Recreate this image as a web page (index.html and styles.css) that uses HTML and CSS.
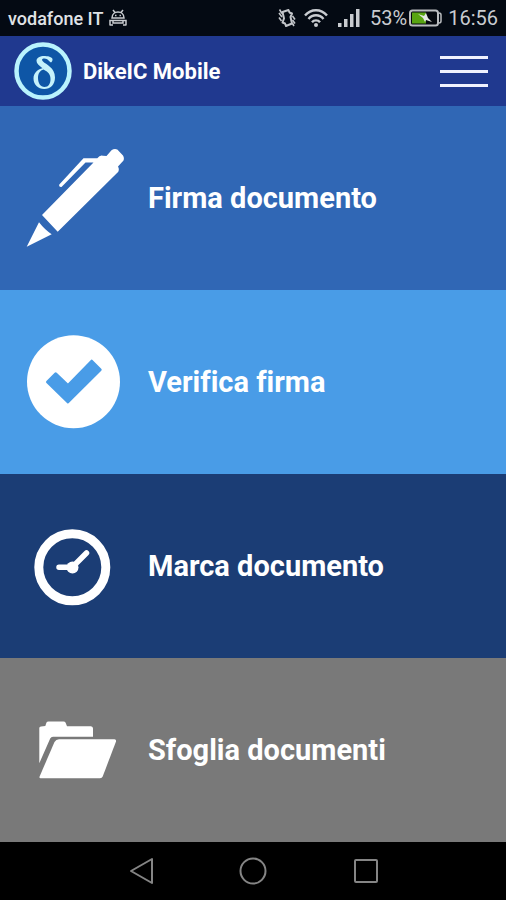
FILE: index.html
```html
<!DOCTYPE html>
<html lang="it">
<head>
<meta charset="utf-8">
<meta name="viewport" content="width=device-width, initial-scale=1">
<title>DikeIC Mobile</title>
<link rel="stylesheet" href="styles.css">
</head>
<body>
<div class="status">
  <span class="carrier">vodafone IT</span>
  <svg class="droid" width="18" height="18" viewBox="0 0 18 18" fill="none" stroke="#c9ccd0" stroke-width="1.500" aria-hidden="true">
    <path d="M4 1l2 2.500M14 1l-2 2.500M3 9c0-8 12-8 12 0zM1 16.500v-5h16v5M4 11.500v2.500h10v-2.500M1 16h3M14 16h3"/>
    <path d="M6 6.500h1.500M10.500 6.500h1.500"/>
  </svg>
  <div class="indicators">
    <svg class="vibrate" width="18" height="20" viewBox="0 0 18 20" fill="none" stroke="#c3c6ca" stroke-width="1.600" stroke-linejoin="round" aria-hidden="true">
      <path d="M4.500 4L10.500 2L11.500 4.500L14 5.500L12.500 9L14 15.500L8 18L7 15.500L4.500 14.500L6 10.500z" stroke-width="2"/>
      <path d="M1 5l3 4M1.500 1.500l2.500 4M1 9.500l2.500 3.500M14.500 8l2.500 3.500M14.500 12l2.500 3.500M14.500 15.500l1.500 2.500"/>
    </svg>
    <svg class="wifi" width="24" height="20" viewBox="0 0 24 20" fill="none" stroke="#c9ccd0" stroke-width="2.400" aria-hidden="true">
      <path d="M1 7.500c6-7 16-7 22 0M4.500 11c4-5 11-5 15 0M8 14.300c2-2.600 6-2.600 8 0"/>
      <circle cx="12" cy="17" r="2" fill="#c9ccd0" stroke="none"/>
    </svg>
    <svg class="signal" width="22" height="20" viewBox="0 0 22 20" fill="#c9ccd0" aria-hidden="true">
      <path d="M0 15h3.500v4H0zM6 11h3.500v8H6zM12 6h3.500v13H12zM18 1h3.500v18H18z"/>
    </svg>
    <span>53%</span>
    <svg class="battery" width="33" height="18" viewBox="0 0 33 18" aria-hidden="true">
      <rect x="1" y="1.500" width="28" height="15" rx="2.500" fill="#05090f" stroke="#b9bcbf" stroke-width="2"/>
      <path d="M3 3.500h14v11H3z" fill="#58a512"/>
      <path d="M30 4q2 0 2 2v6q0 2-2 2" fill="none" stroke="#b9bcbf" stroke-width="1.500"/>
      <path d="M9 5l6 2 2-3 2 5 4 4-6-2-1 2-2-4z" fill="#e4e8e4"/>
    </svg>
    <span>16:56</span>
  </div>
</div>
<header class="bar">
  <svg class="logo" width="58" height="58" viewBox="0 0 58 58" aria-hidden="true">
    <circle cx="29" cy="29" r="26.500" fill="#0e56a6" stroke="#b9f3fd" stroke-width="4.500"/>
    <path fill="#c5f2fb" fill-rule="evenodd" d="M37 20.500C35 19.500 34 16.800 30.500 16.600C28 16.500 27.300 18 29 19.500C32 22.500 41 25.500 41 35.500C41 42.500 36.500 47 30.300 47C24 47 19.500 42.800 19.500 36.500C19.500 31 23.500 27.300 28.500 26.200C25 23.500 22.500 21.500 22.500 18.800C22.500 15.500 26.500 13.800 31 14C35.500 14.200 39 15.500 38.500 18C38.300 19.300 37.800 20 37 20.500zM29.500 27.500C26 28.500 24 31.500 24 36C24 41 26.500 45 30.500 45C34.500 45 36.500 41.500 36.500 37C36.500 32 34 30 29.500 27.500z"/>
  </svg>
  <h1>DikeIC Mobile</h1>
  <button class="menu" type="button" aria-label="Menu"><i></i><i></i><i></i></button>
</header>
<main class="tiles">
  <a class="tile sign" href="#firma">
    <svg width="100" height="100" viewBox="0 0 100 100" fill="#fff" aria-hidden="true">
      <path d="M2.700 98.700L15 74.300Q21 82 27.700 86.300z"/>
      <path d="M18 67L69.500 14.500H61.500L37.500 39Q34.500 39.500 35.300 36.500L59.500 10.300H73.300Q76 6.500 79 7.700L82.500 8L87.500 2.300Q90.500 0 93.300 1.500L99 7.500Q100.500 10 99.500 12.500L94 18.500Q95.500 21 94.300 23.700L33.700 83.700z"/>
    </svg>
    <span>Firma documento</span>
  </a>
  <a class="tile verify" href="#verifica">
    <svg width="100" height="100" viewBox="0 0 100 100" fill="#fff" aria-hidden="true">
      <circle cx="49.500" cy="49.700" r="46.500"/>
      <path d="M23.500 50L31.700 41.800L44 53.500L67.700 29.200L76.200 37.700L44 69.800z" fill="#499ce7" stroke="#499ce7" stroke-width="3" stroke-linejoin="round"/>
    </svg>
    <span>Verifica firma</span>
  </a>
  <a class="tile stamp" href="#marca">
    <svg width="100" height="100" viewBox="0 0 100 100" fill="none" stroke="#fff" aria-hidden="true">
      <circle cx="48.300" cy="51.300" r="33.500" stroke-width="9"/>
      <path d="M35 51.300H48.300L62.500 37" stroke-width="5.500" stroke-linecap="round"/>
      <circle cx="48.500" cy="51.500" r="6" fill="#fff" stroke="none"/>
    </svg>
    <span>Marca documento</span>
  </a>
  <a class="tile browse" href="#sfoglia">
    <svg width="100" height="100" viewBox="0 0 100 100" fill="#fff" aria-hidden="true">
      <path d="M15.300 63.300V28Q15.300 26.500 17 26.500L21.300 26L22.500 22.500Q23 21.500 24.500 21.500H39.500Q41 21.500 41.500 22.500L43 26.200H67Q69 26.500 69 28.500V36.700H29Q27 36.700 26.200 38.500z"/>
      <path d="M35 39.300H90.500Q92.500 39.500 92 41.500L78.700 76.500Q78 78.300 76 78.300H16.500Q15 78 15.600 76.500L30.500 42Q32 39.300 35 39.300z"/>
    </svg>
    <span>Sfoglia documenti</span>
  </a>
</main>
<nav class="keys">
  <button type="button" aria-label="Indietro"><svg width="28" height="28" viewBox="0 0 28 28"><path d="M25 2v24L4 14z"/></svg></button>
  <button type="button" aria-label="Home"><svg width="28" height="28" viewBox="0 0 28 28"><circle cx="14" cy="14" r="12.500"/></svg></button>
  <button type="button" aria-label="Recenti"><svg width="28" height="28" viewBox="0 0 28 28"><rect x="4" y="3" width="22" height="22" rx="1"/></svg></button>
</nav>
</body>
</html>
```
FILE: styles.css
```css
* {
  box-sizing: border-box;
}

body {
  margin: 0;
  min-height: 100vh;
  display: flex;
  flex-direction: column;
  background: #000;
  color: #fff;
  font-family: Roboto, "Liberation Sans", sans-serif;
  font-variant-ligatures: none;
}

button {
  padding: 0;
  border: 0;
  background: none;
}

svg {
  display: block;
  flex: none;
}

.status {
  height: 36px;
  display: flex;
  align-items: center;
  padding: 0 8px;
  background: #040a13;
  color: #c9ccd0;
  font-size: 20px;
  white-space: nowrap;
}

.carrier {
  color: #e0e3e6;
  font-size: 18px;
  font-weight: 500;
}

.droid {
  margin-left: 6px;
}

.indicators {
  margin-left: auto;
  display: flex;
  align-items: center;
}

.wifi {
  margin-left: 8px;
}

.signal {
  margin: 0 10px;
}

.battery {
  margin: 0 6px 0 2px;
}

.bar {
  height: 70px;
  display: flex;
  align-items: center;
  gap: 11px;
  padding: 0 18px 0 14px;
  background: #20398f;
}

.bar h1 {
  margin: 0;
  font-size: 22px;
  font-weight: 700;
}

.menu {
  margin-left: auto;
  width: 48px;
  display: grid;
  gap: 11px;
}

.menu i {
  height: 3px;
  background: #f0f2ff;
}

.tiles {
  flex: 1;
  display: flex;
  flex-direction: column;
}

.tile {
  flex: 1;
  display: flex;
  align-items: center;
  gap: 24px;
  padding: 16px 24px;
  color: #fff;
  font-size: 29px;
  font-weight: 700;
  text-decoration: none;
}

.sign {
  background: #3067b5;
}

.verify {
  background: #499ce7;
}

.stamp {
  background: #1b3d75;
}

.browse {
  background: #797979;
}

.keys {
  height: 58px;
  display: flex;
  align-items: center;
  justify-content: center;
  gap: 84px;
}

.keys svg {
  fill: none;
  stroke: #858585;
  stroke-width: 2;
  stroke-linejoin: round;
}
```
